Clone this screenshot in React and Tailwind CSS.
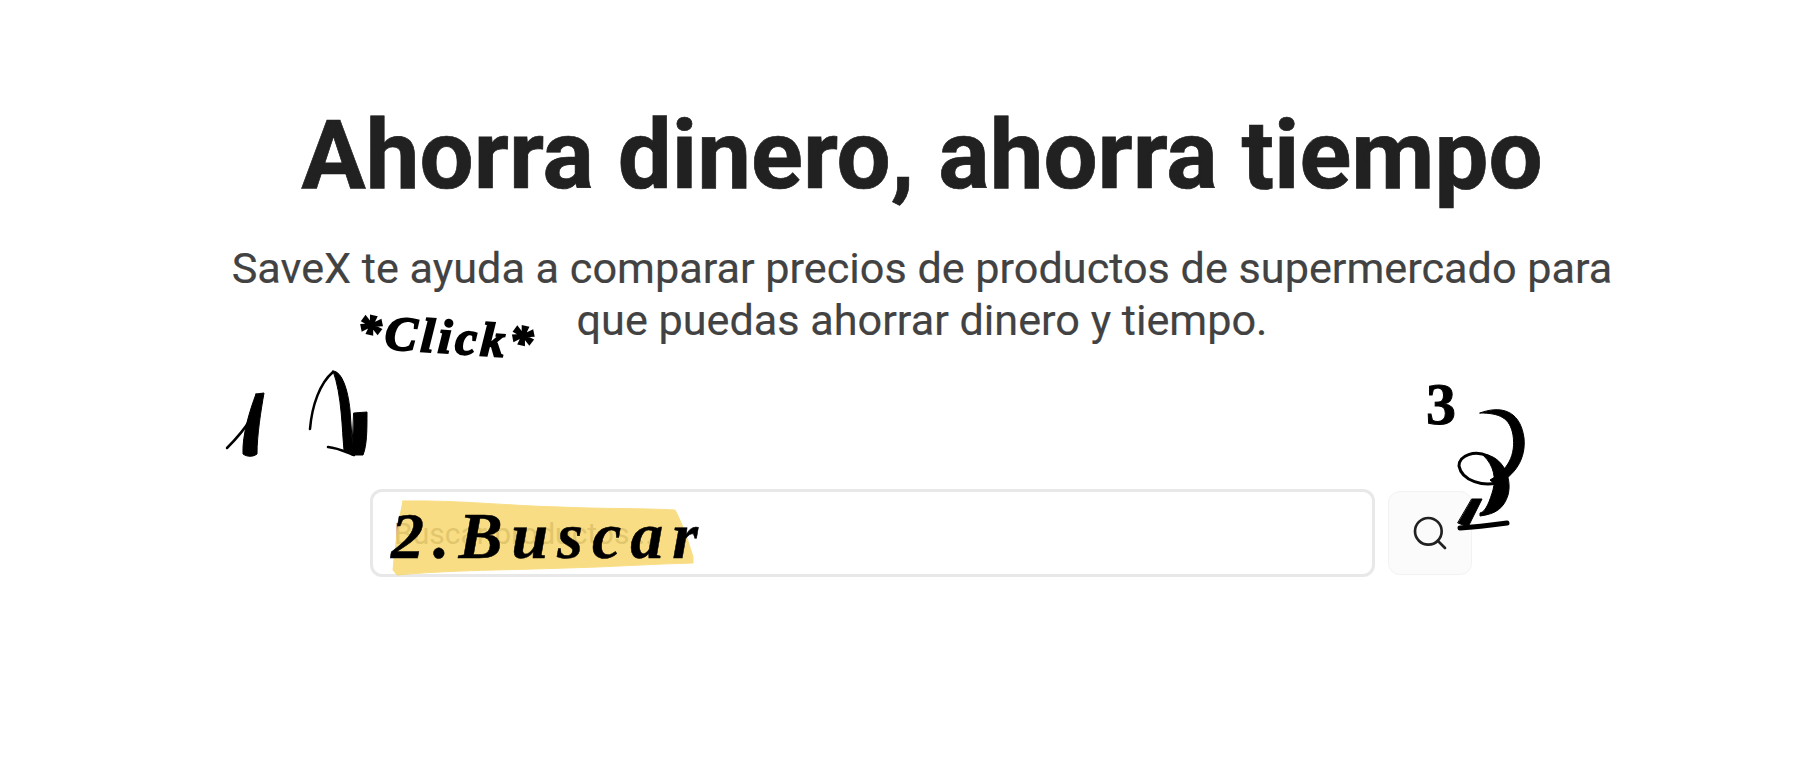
import React from "react";
import { Search } from "lucide-react";

const hand = { fontFamily: '"Liberation Serif", serif' };

function Scribble({ className, viewBox, children }) {
  return (
    <svg className={`absolute pointer-events-none ${className}`} viewBox={viewBox} fill="none" stroke="#000" strokeLinecap="round" strokeLinejoin="round">
      {children}
    </svg>
  );
}

export default function App() {
  return (
    <div className="relative w-[1802px] h-[772px] overflow-hidden bg-white font-['Roboto',sans-serif]">
      <main className="flex flex-col items-center pl-[42px] pt-[95px]">
        <h1 className="text-[96px] leading-[120px] font-bold text-[#212121] whitespace-nowrap [-webkit-text-stroke:0.7px_#212121]">Ahorra dinero, ahorra tiempo</h1>
        <p className="mt-[28px] w-[1420px] text-center text-[43.2px] leading-[52px] text-[#424242] [-webkit-text-stroke:0.2px_#424242]">
          SaveX te ayuda a comparar precios de productos de supermercado para que puedas ahorrar dinero y tiempo.
        </p>
        <div className="mt-[142px] pr-[2px] flex items-center gap-[13px]">
          <div className="w-[1005px] h-[88px] rounded-xl border-[3px] border-[#e8e8e8] bg-white flex items-center px-[21px]">
            <input className="w-full outline-none text-[30px] placeholder:text-[#8a8a8a] bg-transparent" placeholder="Buscar productos..." />
          </div>
          <button className="w-[84px] h-[84px] rounded-xl border border-[#f2f2f2] bg-[#fbfbfb] flex items-center justify-center text-[#212121]">
            <Search size={40} strokeWidth={1.6} />
          </button>
        </div>
      </main>

      {/* yellow highlighter */}
      <Scribble className="left-[390px] top-[498px] w-[320px] h-[80px] opacity-[0.8] blur-[0.6px]" viewBox="0 0 320 80">
        <path d="M13 3 C70 2 120 8 170 9 C210 11 250 10 285 12 C292 25 298 42 303 59 L303 65 C260 66 220 69 177 70 C120 72 60 72 7 77 L3 72 C5 50 8 25 13 3 Z" fill="#f7d566" stroke="#f7d566" strokeWidth="1" />
      </Scribble>

      {/* handwritten labels */}
      <span style={hand} className="absolute left-[357px] top-[313px] rotate-[4deg] text-[48px] leading-[48px] font-bold italic text-black tracking-[4px] [-webkit-text-stroke:2px_black]">*Click*</span>
      <span style={hand} className="absolute left-[391px] top-[497px] text-[66px] leading-[78px] font-bold italic text-black tracking-[9px] [-webkit-text-stroke:0.5px_black]">2.Buscar</span>
      <span style={hand} className="absolute left-[1426px] top-[374px] text-[60px] leading-[60px] font-bold text-black [-webkit-text-stroke:1px_black]">3</span>

      {/* 1 */}
      <Scribble className="left-[225px] top-[390px] w-[40px] h-[70px]" viewBox="0 0 40 70">
        <path d="M2 58 C12 48 19 40 25 30" strokeWidth="2.5" />
        <path d="M31 4 L39 3 C36 20 32 45 32 64 C28 67 22 67 18 64 C17 45 25 20 31 4 Z" fill="#000" strokeWidth="1" />
      </Scribble>

      {/* arrow 1 */}
      <Scribble className="left-[300px] top-[365px] w-[75px] h-[100px]" viewBox="0 0 75 100">
        <path d="M10 64 C12 40 20 18 33 7" strokeWidth="2.5" />
        <path d="M33 6 C42 6 48 25 50 45 L53 88 L44 85 C42 65 42 30 33 6 Z" fill="#000" strokeWidth="1" />
        <path d="M54 48 L67 47 C67 65 67 80 63 90 L52 90 Z" fill="#000" strokeWidth="1" />
        <path d="M28 82 C38 83 46 87 54 90" strokeWidth="2.5" />
      </Scribble>

      {/* arrow 3 */}
      <Scribble className="left-[1450px] top-[400px] w-[80px] h-[140px]" viewBox="0 0 80 140">
        <path d="M30 13 C48 6 70 8 74 38 C76 58 66 75 46 85 L40 80 C58 70 66 55 63 35 C60 18 50 13 30 13 Z" fill="#000" strokeWidth="1" />
        <path d="M46 83 C35 86 12 82 9 66 C9 55 25 50 38 56" strokeWidth="3" />
        <path d="M38 55 C55 60 62 80 58 95 C54 108 46 114 30 116 L30 113 C36 112 40 100 43 90 C46 78 44 66 34 56 Z" fill="#000" strokeWidth="1" />
        <path d="M22 99 L32 99 L18 127 L8 123 Z" fill="#000" strokeWidth="1" />
        <path d="M10 128 C26 127 42 125 57 123" strokeWidth="5" />
      </Scribble>
    </div>
  );
}
